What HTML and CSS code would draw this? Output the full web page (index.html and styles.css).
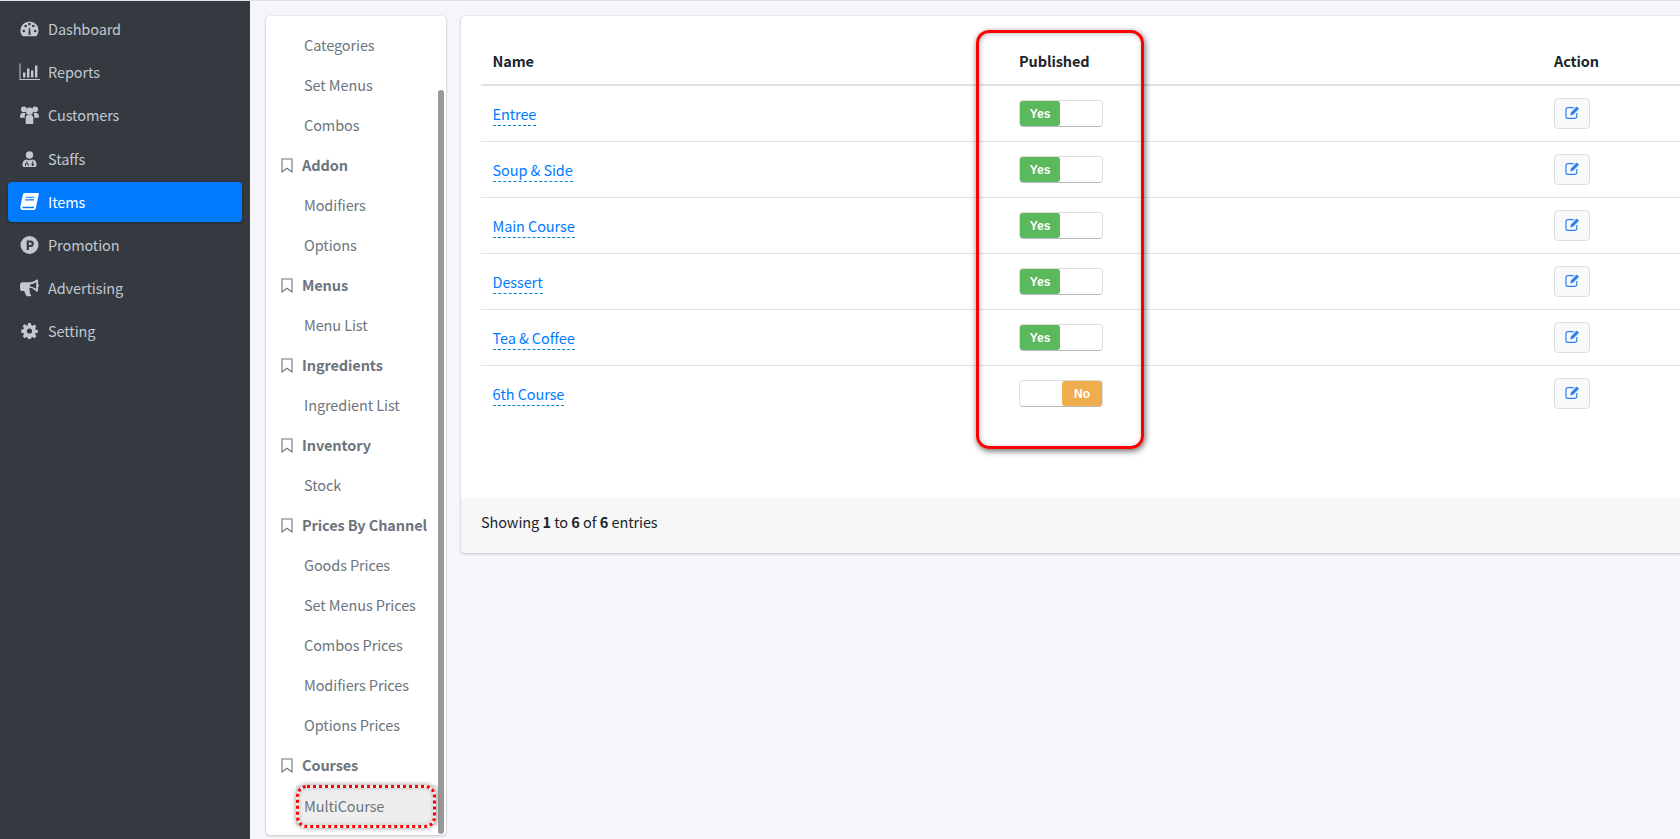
FILE: index.html
```html
<!DOCTYPE html>
<html lang="en">
<head>
    <meta charset="UTF-8">
    <title>MultiCourse</title>
    <link rel="stylesheet" href="styles.css">
</head>
<body>
<svg class="defs" width="0" height="0">
    <symbol id="bookmark" viewBox="0 0 12 15"><path d="M1 1h10v13L6 10.2 1 14z" fill="none" stroke="currentColor" stroke-width="1.1"/></symbol>
    <symbol id="edit" viewBox="0 0 16 16"><path d="M12.6 8.600v3.600a2 2 0 0 1-2 2H3a2 2 0 0 1-2-2V4.800a2 2 0 0 1 2-2h6.400" fill="none" stroke="currentColor" stroke-width="1.300"/><path d="M5.600 11l.7-3L12.500 1.600 15 4 8.600 10.300z" fill="currentColor"/></symbol>
</svg>

<aside class="sidebar">
    <a class="nav-link">
        <svg class="nav-icon" viewBox="0 0 20 18"><path fill-rule="evenodd" d="M10 1a9.500 9.500 0 0 0-9.500 9.500c0 2 .6 3.900 1.700 5.400.3.400.7.600 1.200.600h13.200c.5 0 .9-.2 1.200-.6a9.500 9.500 0 0 0 1.700-5.400A9.500 9.500 0 0 0 10 1zM4 12.500a1.400 1.400 0 1 1 0-2.800 1.400 1.400 0 0 1 0 2.800zM6 7.200a1.400 1.400 0 1 1 0-2.800 1.400 1.400 0 0 1 0 2.800zM10 5.200a1.400 1.400 0 1 1 0-2.800 1.400 1.400 0 0 1 0 2.800zM11.200 15H8.800l.6-7h1.200zM16 12.500a1.400 1.400 0 1 1 0-2.800 1.400 1.400 0 0 1 0 2.800zM14 7.200a1.400 1.400 0 1 1 0-2.800 1.400 1.400 0 0 1 0 2.800z"/></svg>
        Dashboard
    </a>
    <a class="nav-link">
        <svg class="nav-icon nav-icon-wide" viewBox="0 0 21 17"><path d="M.5 0h1v15.500H21v1H.5zM4 9h2.400v5H4zM8 5h2.400v9H8zM12 7h2.400v7H12zM16 2h2.400v12H16z"/></svg>
        Reports
    </a>
    <a class="nav-link">
        <svg class="nav-icon nav-icon-wide" viewBox="0 0 20 19"><circle cx="4" cy="3.500" r="3"/><circle cx="16" cy="3.500" r="3"/><circle cx="10" cy="5.500" r="3.800"/><path d="M0 11.500c0-2.500 1-4 3-4h2c.3 0 .6.100.8.200A5 5 0 0 0 5 10.500v2H1.500C.6 12.500 0 12.200 0 11.500zM20 11.500c0-2.500-1-4-3-4h-2c-.3 0-.6.100-.8.200.5.800.8 1.800.8 2.800v2h3.500c.9 0 1.500-.3 1.500-1zM6 18v-5c0-2 1-3.300 2.500-3.800 1 .6 2 .6 3 0C13 9.700 14 11 14 13v5c0 .6-.4 1-1 1H7c-.6 0-1-.4-1-1z"/></svg>
        Customers
    </a>
    <a class="nav-link">
        <svg class="nav-icon nav-icon-sm" viewBox="0 0 14 16"><circle cx="7" cy="4" r="3.700"/><path fill-rule="evenodd" d="M4 8.500c.9.500 1.900.8 3 .8s2.100-.3 3-.8c2.400.2 4 2 4 4.500v1.500c0 .8-.7 1.500-1.500 1.500h-11C.7 16 0 15.300 0 14.500V13c0-2.500 1.600-4.300 4-4.500zM4 10v1.800a1.700 1.700 0 0 0-1.500 1.700V15h1v-1.500a.8.800 0 0 1 1.600 0V15h1v-1.500c0-.8-.7-1.500-1.300-1.700V10zM9.800 10v2.300a1.300 1.300 0 1 0 .8 0V10z"/></svg>
        Staffs
    </a>
    <a class="nav-link active">
        <svg class="nav-icon" viewBox="0 0 18 17"><path d="M4.500 0H17c.7 0 1 .5.800 1.100L15 14.300c-.2.900-.7 1.700-2 1.700H2.500C1 16 0 14.800.3 13.300L2.600 2C2.900.7 3.500 0 4.500 0zM5.500 3.500l-.2 1h8.500l.2-1zM5 6l-.2 1h8.500l.2-1zM2.300 13.200c-.2.800.2 1.300.9 1.300h9.900c.1-.5.300-1 .5-1.500H3.500c-.5 0-1 0-1.200.2z"/></svg>
        Items
    </a>
    <a class="nav-link">
        <svg class="nav-icon" viewBox="0 0 18 18"><path fill-rule="evenodd" d="M9 0a9 9 0 1 1 0 18A9 9 0 0 1 9 0zM6.200 4.500V14h2.200v-2.900h1.500a3.300 3.300 0 0 0 0-6.600zM8.400 6.500h1.500a1.300 1.300 0 0 1 0 2.600H8.400z"/></svg>
        Promotion
    </a>
    <a class="nav-link">
        <svg class="nav-icon" viewBox="0 0 20 18"><path fill-rule="evenodd" d="M18 0c.6 0 1 .4 1 1v4c.6.300 1 .9 1 1.500S19.600 7.700 19 8v4c0 .7-.5 1-1 1-.3 0-.5-.1-.7-.2l-2.500-2.100C13.500 9.700 12 9 10 8.800v3.100a2 2 0 0 1 .2 2.300l1.500 2.400c.2.500-.2 1-.7 1H7.500c-.4 0-.7-.2-.9-.5l-2.200-4.900H3a3 3 0 0 1-3-3V6a3 3 0 0 1 3-3h6c2.700 0 5.700-1 8.200-2.800.3-.1.500-.2.800-.2zM17 3c-2 1.300-4.500 2.200-6.500 2.400v2c2 .2 4.500 1.100 6.500 2.500z"/></svg>
        Advertising
    </a>
    <a class="nav-link">
        <svg class="nav-icon nav-icon-sm" viewBox="0 0 16 16"><path fill-rule="evenodd" d="M6.600 0h2.800l.4 2.200 1.200.5L12.900 1.400l2 2-1.300 1.900.5 1.200 2.200.4v2.800l-2.200.4-.5 1.200 1.300 1.900-2 2-1.900-1.300-1.200.5-.4 2.200H6.600l-.4-2.200-1.200-.5-1.900 1.300-2-2 1.300-1.900-.5-1.200-2.200-.4V6.600l2.200-.4.5-1.200-1.300-1.900 2-2L5 2.700l1.200-.5zM8 5.400a2.600 2.600 0 1 0 0 5.200 2.600 2.600 0 0 0 0-5.200z"/></svg>
        Setting
    </a>
</aside>

<div class="content">
    <nav class="subnav">
        <a class="sub-link">Categories</a>
        <a class="sub-link">Set Menus</a>
        <a class="sub-link">Combos</a>
        <div class="sub-head"><svg class="mark"><use href="#bookmark"/></svg>Addon</div>
        <a class="sub-link">Modifiers</a>
        <a class="sub-link">Options</a>
        <div class="sub-head"><svg class="mark"><use href="#bookmark"/></svg>Menus</div>
        <a class="sub-link">Menu List</a>
        <div class="sub-head"><svg class="mark"><use href="#bookmark"/></svg>Ingredients</div>
        <a class="sub-link">Ingredient List</a>
        <div class="sub-head"><svg class="mark"><use href="#bookmark"/></svg>Inventory</div>
        <a class="sub-link">Stock</a>
        <div class="sub-head"><svg class="mark"><use href="#bookmark"/></svg>Prices By Channel</div>
        <a class="sub-link">Goods Prices</a>
        <a class="sub-link">Set Menus Prices</a>
        <a class="sub-link">Combos Prices</a>
        <a class="sub-link">Modifiers Prices</a>
        <a class="sub-link">Options Prices</a>
        <div class="sub-head"><svg class="mark"><use href="#bookmark"/></svg>Courses</div>
        <a class="sub-link current">MultiCourse</a>
        <div class="scroll-thumb"></div>
    </nav>

    <section class="card">
        <div class="card-body">
            <table class="list">
                <thead>
                    <tr><th class="col-name">Name</th><th class="col-pub">Published</th><th>Action</th></tr>
                </thead>
                <tbody>
                    <tr>
                        <td><a class="editable">Entree</a></td>
                        <td><div class="toggle"><span class="yes">Yes</span></div></td>
                        <td><button class="edit-btn"><svg><use href="#edit"/></svg></button></td>
                    </tr>
                    <tr>
                        <td><a class="editable">Soup &amp; Side</a></td>
                        <td><div class="toggle"><span class="yes">Yes</span></div></td>
                        <td><button class="edit-btn"><svg><use href="#edit"/></svg></button></td>
                    </tr>
                    <tr>
                        <td><a class="editable">Main Course</a></td>
                        <td><div class="toggle"><span class="yes">Yes</span></div></td>
                        <td><button class="edit-btn"><svg><use href="#edit"/></svg></button></td>
                    </tr>
                    <tr>
                        <td><a class="editable">Dessert</a></td>
                        <td><div class="toggle"><span class="yes">Yes</span></div></td>
                        <td><button class="edit-btn"><svg><use href="#edit"/></svg></button></td>
                    </tr>
                    <tr>
                        <td><a class="editable">Tea &amp; Coffee</a></td>
                        <td><div class="toggle"><span class="yes">Yes</span></div></td>
                        <td><button class="edit-btn"><svg><use href="#edit"/></svg></button></td>
                    </tr>
                    <tr>
                        <td><a class="editable">6th Course</a></td>
                        <td><div class="toggle off"><span class="no">No</span></div></td>
                        <td><button class="edit-btn"><svg><use href="#edit"/></svg></button></td>
                    </tr>
                </tbody>
            </table>
        </div>
        <div class="card-footer">Showing <b>1</b> to <b>6</b> of <b>6</b> entries</div>
    </section>
</div>

<!-- red marks drawn on the screenshot -->
<div class="mark-published"></div>
<div class="mark-multicourse"></div>
</body>
</html>
```

FILE: styles.css
```css
html, body { height: 100%; }
body { margin: 0; display: flex; overflow: hidden; background: #f4f6f9; color: #212529; font-family: "Noto Sans CJK SC", "Source Sans Pro", "Open Sans", sans-serif; font-size: 14.5px; letter-spacing: -.1px; line-height: 20px; border-top: 1px solid #dee2e6; box-sizing: border-box; }
.defs { position: absolute; }

.sidebar { width: 250px; flex: none; background: #343a40; padding-top: 8px; box-sizing: border-box; display: flex; flex-direction: column; gap: 3.2px; }
.nav-link { height: 40px; margin: 0 8px; padding-left: 9px; display: flex; align-items: center; color: #c2c7d0; border-radius: 4px; box-sizing: border-box; }
.nav-link.active { background: #007bff; color: #fff; box-shadow: 0 1px 3px rgba(0, 0, 0, .3); }
.nav-icon { width: 19px; height: 18px; margin: 0 9px 0 3px; fill: currentColor; flex: none; }
.nav-icon-sm { width: 17px; height: 16px; margin: 0 10px 0 4px; }
.nav-icon-wide { width: 21px; height: 18px; margin: 0 8px 0 2px; }

.content { flex: 1; display: flex; gap: 15px; padding: 15px 16px 4px; min-width: 0; }

.subnav { position: relative; width: 180px; flex: none; background: #fff; border-radius: 4px; box-shadow: 0 0 1px rgba(0, 0, 0, .2), 0 1px 3px rgba(0, 0, 0, .2); padding-top: 9px; box-sizing: border-box; overflow: hidden; }
.sub-link { display: flex; align-items: center; height: 40px; padding-left: 38px; color: #6c757d; }
.sub-link.current { height: 41px; margin-left: 30px; padding-left: 8px; background: #eee; width: 142px; box-sizing: border-box; }
.sub-head { display: flex; align-items: center; height: 40px; padding-left: 15px; color: #6c757d; font-weight: 700; }
.mark { width: 12px; height: 15px; margin-right: 9px; color: #6c757d; }
.scroll-thumb { position: absolute; right: 2px; top: 74px; bottom: 1px; width: 6px; border-radius: 3px; background: #999; }

.card { width: 1300px; flex: none; height: 537px; display: flex; flex-direction: column; background: #fff; border-radius: 4px; box-shadow: 0 0 1px rgba(0, 0, 0, .2), 0 1px 3px rgba(0, 0, 0, .2); }
.card-body { flex: 1; padding: 24px 20px 0; }
.card-footer { height: 47px; padding: 0 20px 8px; display: flex; align-items: center; gap: 3.3px; background: #f7f7f7; border-radius: 0 0 4px 4px; }
.card-footer b { font-weight: 700; }

.list { border-collapse: collapse; width: 1260px; table-layout: fixed; }
.list th { height: 45px; padding: 0 12px 3px; text-align: left; font-weight: 700; border-bottom: 2px solid #dee2e6; box-sizing: border-box; }
.list td { height: 55px; padding: 0 12px; border-bottom: 1px solid #dee2e6; }
.list tr:last-child td { border-bottom: 0; }
.list th:first-child, .list td:first-child { padding-left: 11.5px; }
.col-name { width: 526px; }
.col-pub { width: 535px; }

.editable { color: #007bff; border-bottom: 1px dashed #08c; padding-bottom: 1px; }

.toggle { width: 84px; height: 27px; display: flex; box-sizing: border-box; border: 1px solid #ddd; border-bottom-color: #bbb; border-radius: 4px; background: #fff; }
.toggle.off { justify-content: flex-end; }
.toggle span { width: 40px; height: 25px; display: flex; align-items: center; justify-content: center; color: #fff; font-family: "Liberation Sans", Arial, sans-serif; font-size: 12px; font-weight: 700; letter-spacing: 0; border-radius: 3px; }
.yes { background: #5cb85c; }
.no { background: #f0ad4e; }

.edit-btn { width: 36px; height: 31px; padding: 0 0 2px; display: flex; align-items: center; justify-content: center; background: #f8f9fa; border: 1px solid #ddd; border-radius: 4px; color: #2f7ff5; }
.edit-btn svg { width: 15px; height: 15px; }

.mark-published { position: absolute; left: 976px; top: 30px; width: 168px; height: 419px; box-sizing: border-box; border: 3px solid #f00; border-radius: 13px; box-shadow: 1px 2px 6px rgba(0, 0, 0, .6), inset 1px 1px 5px rgba(0, 0, 0, .25); }
.mark-multicourse { position: absolute; left: 296px; top: 785px; width: 140px; height: 43px; box-sizing: border-box; border: 3px dotted #f00; border-radius: 11px; box-shadow: 0 0 5px rgba(0, 0, 0, .45), inset 0 0 4px rgba(0, 0, 0, .2); }
```
